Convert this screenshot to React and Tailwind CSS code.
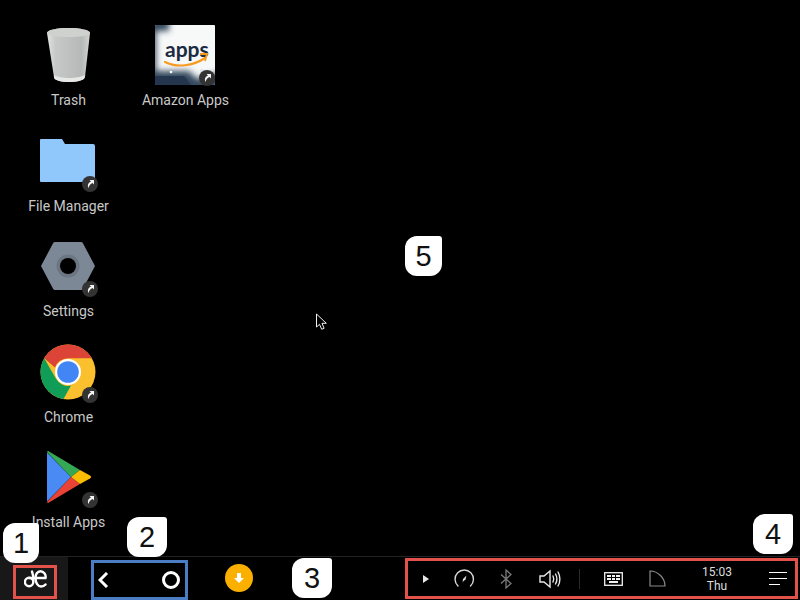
const sans = "font-['Roboto',sans-serif]";

function Shortcut() {
  return (
    <span className="absolute left-[44px] top-[45px] flex h-4 w-4 items-center justify-center rounded-full bg-[#333333]">
      <svg width="10" height="10" viewBox="0 0 10 10" fill="#f4f4f4">
        <path d="M4.500 1h4.500v4.500L7.600 4C5.600 4.800 4.200 6.200 3.400 9 2.200 5.800 3.400 3.400 6 2.400z" />
      </svg>
    </span>
  );
}

function TrashIcon() {
  return (
    <svg width="60" height="60" viewBox="0 0 60 60">
      <defs>
        <linearGradient id="cup" x1="0" x2="1" y1="0" y2="0">
          <stop offset="0" stopColor="#e2e4e2" />
          <stop offset="0.2" stopColor="#c6c9c7" />
          <stop offset="0.8" stopColor="#b6b9b7" />
          <stop offset="1" stopColor="#d2d4d2" />
        </linearGradient>
        <filter id="cupblur">
          <feGaussianBlur stdDeviation="0.6" />
        </filter>
      </defs>
      <g filter="url(#cupblur)">
        <path d="M9 8c0-3 10-5 21.500-5S52 5 52 8l-5 44c-.5 3-8 5-16 5s-14.500-2-15-5z" fill="url(#cup)" />
        <path d="M9 8c0-3 10-5 21.500-5S52 5 52 8c0 2.500-10 4-21.500 4S9 10.500 9 8z" fill="#cfd1cf" />
        <path d="M16 50c6 4 24 4 31 0l-.5 3c-1 2.500-8 4-15.500 4s-14-1.500-15-4z" fill="#e6e8e6" />
      </g>
    </svg>
  );
}

function AmazonIcon() {
  return (
    <svg width="60" height="60" viewBox="0 0 60 60">
      <defs>
        <filter id="soft" x="-30%" y="-30%" width="160%" height="160%">
          <feGaussianBlur stdDeviation="3" />
        </filter>
        <clipPath id="sq">
          <rect width="60" height="60" rx="1" />
        </clipPath>
      </defs>
      <g clipPath="url(#sq)">
        <rect width="60" height="60" fill="#f7f8f8" />
        <g filter="url(#soft)" fill="#33465c">
          <rect x="-6" y="-6" width="20" height="12" />
          <rect x="-6" y="6" width="7" height="48" />
          <path d="M-6 46h40l8 8 26-8v20H-6z" />
        </g>
        <path d="M-1 51h30l8 10H-1z" fill="#24364d" />
        <circle cx="16" cy="47" r="1.300" fill="#fff" />
        <circle cx="47" cy="46" r="2" fill="#dfe4e8" />
        <text x="10" y="32" fontFamily="Lato, sans-serif" fontWeight="700" fontSize="21" fill="#1b2b42">apps</text>
        <path d="M10 37c12 6 28 4 40-4" fill="none" stroke="#f79a1e" strokeWidth="2.200" strokeLinecap="round" />
        <path d="M45 29l7 0-2 7" fill="none" stroke="#f79a1e" strokeWidth="1.800" />
      </g>
    </svg>
  );
}

function FolderIcon() {
  return (
    <svg width="60" height="60" viewBox="0 0 60 60">
      <path d="M2 9a1 1 0 0 1 1-1h21l3 5h28a2 2 0 0 1 2 2v34a2 2 0 0 1-2 2H3a1 1 0 0 1-1-1z" fill="#90c8fb" />
    </svg>
  );
}

function SettingsIcon() {
  return (
    <svg width="60" height="60" viewBox="0 0 60 60">
      <path d="M17 6h26a2 2 0 0 1 1.800 1L57 30 44.800 53a2 2 0 0 1-1.800 1H17a2 2 0 0 1-1.800-1L3 30 15.200 7a2 2 0 0 1 1.800-1z" fill="#7d8896" />
      <circle cx="30" cy="30" r="11.500" fill="#6c7683" />
      <circle cx="30" cy="30" r="8" fill="#000" />
    </svg>
  );
}

function ChromeIcon() {
  return (
    <svg width="60" height="60" viewBox="0 0 60 60">
      <circle cx="30" cy="30" r="27.500" fill="#fbc02d" />
      <path d="M30 2.500a27.500 27.500 0 0 1 23.800 13.700H30a13.800 13.800 0 0 0-13 9.400L6.200 16.200A27.500 27.500 0 0 1 30 2.500z" fill="#db4437" />
      <path d="M6.200 16.200 18 36.800a13.800 13.800 0 0 0 15 6.800L25.500 57A27.500 27.500 0 0 1 6.200 16.200z" fill="#0f9d58" />
      <circle cx="30" cy="30" r="13" fill="#fff" />
      <circle cx="30" cy="30" r="10.800" fill="#4285f4" />
    </svg>
  );
}

function PlayIcon() {
  return (
    <svg width="60" height="60" viewBox="0 0 60 60">
      <path d="M9 5.500v49L33 30z" fill="#4a8af5" />
      <path d="M9 5c.3-1 1-1.200 2-.6L42 23l-9 7z" fill="#34a853" />
      <path d="M9 55c.3 1 1 1.200 2 .6L42 37l-9-7z" fill="#ea4335" />
      <path d="M33 30l9-7 10 5.500c1.400.8 1.400 2.200 0 3L42 37z" fill="#fbbc04" />
    </svg>
  );
}

const desktopItems = [
  { label: "Trash", icon: <TrashIcon /> },
  { label: "Amazon Apps", icon: <AmazonIcon />, shortcut: true },
  { label: "File Manager", icon: <FolderIcon />, shortcut: true },
  null,
  { label: "Settings", icon: <SettingsIcon />, shortcut: true },
  null,
  { label: "Chrome", icon: <ChromeIcon />, shortcut: true },
  null,
  { label: "Install Apps", icon: <PlayIcon />, shortcut: true },
];

function DesktopIcon({ item }) {
  return (
    <div className="flex flex-col items-center">
      <div className="relative h-[60px] w-[60px]">
        {item.icon}
        {item.shortcut && <Shortcut />}
      </div>
      <span className={`ml-[2px] mt-[5px] text-[14px] leading-5 whitespace-nowrap text-[#c8c8c8] ${sans}`}>
        {item.label}
      </span>
    </div>
  );
}

function Badge({ n, className }) {
  return (
    <div
      className={`absolute flex h-10 items-center justify-center rounded-[12px] rounded-tr-[3px] bg-white text-[29px] leading-none text-[#111] font-['Liberation_Sans',sans-serif] ${className}`}
    >
      {n}
    </div>
  );
}

function Tray() {
  return (
    <div className="ml-[152px] mt-[1px] flex h-[41px] w-[393px] shrink-0 items-center border-[3px] border-[#e2524b]">
      <svg className="ml-[15px]" width="6" height="8" viewBox="0 0 6 8">
        <path d="M0 0l6 4-6 4z" fill="#e8e8e8" />
      </svg>
      <svg className="ml-[24px]" width="22" height="22" viewBox="0 0 22 22" fill="none">
        <path d="M5 18A9.200 9.200 0 1 1 17.500 18" stroke="#d8d8d8" strokeWidth="1.400" strokeLinecap="round" />
        <path d="M9.500 14l3-2.500 1-4-3.500 3.500z" fill="#e0e0e0" />
      </svg>
      <svg className="ml-[24px]" width="14" height="20" viewBox="0 0 14 20" fill="none">
        <path d="M2 5.500l10 9L7 19V1l5 4.500-10 9" stroke="#7a7a7a" strokeWidth="1.300" />
      </svg>
      <svg className="ml-[26px]" width="22" height="20" viewBox="0 0 22 20" fill="none" stroke="#e8e8e8" strokeWidth="1.400">
        <path d="M1 7h4l6-5v16l-6-5H1z" />
        <path d="M14 7c1 2 1 4 0 6M16.500 5c1.700 3 1.700 7 0 10M19 3c2.500 4 2.500 10 0 14" strokeLinecap="round" />
      </svg>
      <div className="ml-[18px] h-5 w-px bg-[#2a2a2a]" />
      <svg className="ml-[24px]" width="19" height="14" viewBox="0 0 19 14">
        <rect x="0.700" y="0.700" width="17.600" height="12.600" fill="none" stroke="#f2f2f2" strokeWidth="1.300" />
        <path d="M3 3h4v2H3zM8 3h3v2H8zM12 3h4v2h-4zM3 6h4v2H3zM8 6h3v2H8zM12 6h4v2h-4zM5 9h9v2H5z" fill="#f2f2f2" />
      </svg>
      <svg className="ml-[26px]" width="17" height="17" viewBox="0 0 17 17" fill="none">
        <path d="M1 1v15h15C16 8 9 1 1 1z" stroke="#8a8a8a" strokeWidth="1.200" />
      </svg>
      <div className={`ml-[34px] flex w-[34px] flex-col items-center text-[12px] leading-[14px] text-[#dddddd] ${sans}`}>
        <span>15:03</span>
        <span>Thu</span>
      </div>
      <div className="ml-[35px] flex w-[18px] flex-col gap-[5px]">
        <div className="h-px w-[18px] bg-white" />
        <div className="h-px w-[18px] bg-white" />
        <div className="h-px w-[11px] bg-white" />
      </div>
    </div>
  );
}

export default function App() {
  return (
    <div className="relative flex h-[600px] w-[800px] flex-col overflow-hidden bg-black">
      <main className="flex-1">
        <div className="grid grid-cols-[117px_117px] auto-rows-[105.5px] pl-[9px] pt-[25px]">
          {desktopItems.map((item, i) =>
            item ? <DesktopIcon key={item.label} item={item} /> : <div key={i} />
          )}
        </div>
      </main>

      <footer className="flex h-[44px] shrink-0 border-t border-[#222222]">
        <div className="h-full w-[68px] shrink-0 bg-[#181818] pl-[13px] pt-[8px]">
          <div className="flex h-[34px] w-[44px] items-center justify-center border-[3px] border-[#e2524b] pb-[6px]">
            {/* de logo: the e's bar runs into the top of the d's bowl */}
            <svg width="23" height="18" viewBox="0 0 23 18" fill="none" stroke="#fff" strokeWidth="2.400" strokeLinecap="round">
              <path d="M9.300 12a4.200 4.200 0 1 1-8.400 0 4.200 4.200 0 0 1 8.400 0c0-3.500.3-6.500-1.300-10.500" />
              <path d="M5 8h16.500c.8-3.500-2-6.800-5-6.800-3.200 0-5 3.300-5 6.800 0 5 2.500 8.500 5.500 8.500 2 0 3.500-.8 4.500-2" />
            </svg>
          </div>
        </div>

        <div className="ml-[23px] mt-[3px] flex h-[40px] w-[97px] shrink-0 items-center justify-between border-[3px] border-[#4a7dc4] pl-[4px] pr-[5px]">
          <svg width="12" height="16" viewBox="0 0 12 16" fill="none">
            <path d="M9 1 2 8l7 7" stroke="#fff" strokeWidth="3" />
          </svg>
          <div className="h-[18px] w-[18px] rounded-full border-[3px] border-white" />
        </div>

        <div className="ml-[37px] mt-[7px] flex h-[28px] w-[28px] shrink-0 items-center justify-center rounded-full bg-[#fbb000]">
          <svg width="14" height="14" viewBox="0 0 14 14">
            <path d="M5 2h4v5h3l-5 5-5-5h3z" fill="#fff" />
          </svg>
        </div>

        <Tray />
      </footer>

      <Badge n="1" className="left-[3px] top-[523px] w-[36px]" />
      <Badge n="2" className="left-[127px] top-[517px] w-10" />
      <Badge n="3" className="left-[292px] top-[558px] w-10" />
      <Badge n="4" className="left-[753px] top-[514px] w-10" />
      <Badge n="5" className="left-[405px] top-[236px] w-[37px]" />

      <svg className="absolute left-[315px] top-[313px]" width="14" height="18" viewBox="0 0 14 18">
        <path d="M1.500 1v13l3-2.700 2.200 5 2.400-1-2.100-5h4.300z" fill="#000" stroke="#f0f0f0" strokeWidth="1" />
      </svg>
    </div>
  );
}
